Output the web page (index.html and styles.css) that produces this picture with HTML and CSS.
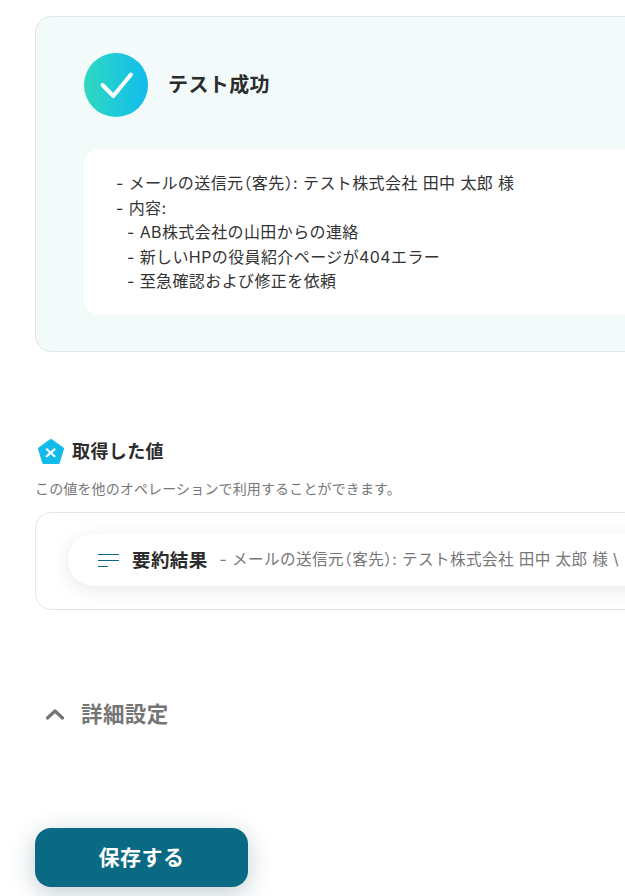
FILE: index.html
```html
<!DOCTYPE html>
<html lang="ja">
<head>
  <meta charset="UTF-8" />
  <title>テスト成功</title>
  <link rel="stylesheet" href="styles.css">
</head>
<body>
  <div class="page">
    <!-- result card -->
    <div class="result-card">
      <div class="result-head">
        <svg class="check" width="64" height="64" viewBox="0 0 64 64">
          <defs>
            <linearGradient id="checkGrad" x1="0" y1="0" x2="1" y2="0">
              <stop offset="0" stop-color="#2fd9bf" />
              <stop offset="1" stop-color="#10bcee" />
            </linearGradient>
          </defs>
          <circle cx="32" cy="32" r="32" fill="url(#checkGrad)" />
          <path d="M18.500 32L29.300 43L47 21.500" fill="none" stroke="#fff" stroke-width="4" stroke-linecap="round" stroke-linejoin="round" />
        </svg>
        <h2>テスト成功</h2>
      </div>
      <div class="result-body">
        <p>- メールの送信元<span class="halt">（客先）</span>: テスト株式会社 田中 太郎 様</p>
        <p>- 内容:</p>
        <p class="sub">- AB株式会社の山田からの連絡</p>
        <p class="sub">- 新しいHPの役員紹介ページが404エラー</p>
        <p class="sub">- 至急確認および修正を依頼</p>
      </div>
    </div>

    <!-- values -->
    <div class="values-title">
      <svg width="28" height="28" viewBox="0 0 28 28">
        <path d="M14 2.500L25.500 10.800L21.300 24.500H6.700L2.500 10.800Z" fill="#12bbe9" stroke="#12bbe9" stroke-width="3" stroke-linejoin="round" />
        <path d="M9.800 11.300L17.500 18.200M17.500 11.300L15 13.500M12.300 15.900L9.800 18.200" fill="none" stroke="#fff" stroke-width="2.200" stroke-linecap="round" />
      </svg>
      <h3>取得した値</h3>
    </div>
    <p class="values-note">この値を他のオペレーションで利用することができます。</p>
    <div class="values-box">
      <div class="value-pill">
        <svg class="lines" width="22" height="14" viewBox="0 0 22 14">
          <path d="M1 1.500H22" stroke="#0a6a84" stroke-width="1" />
          <path d="M1 7.500H22" stroke="#0a6a84" stroke-width="1" />
          <path d="M1 13.500H11" stroke="#0a6a84" stroke-width="1" />
        </svg>
        <span class="value-name">要約結果</span>
        <span class="value-text">- メールの送信元<span class="halt">（客先）</span>: テスト株式会社 田中 太郎 様 \</span>
      </div>
    </div>

    <!-- details -->
    <div class="details">
      <svg width="20" height="12" viewBox="0 0 20 12">
        <path d="M2.500 10L10 3L17.500 10" fill="none" stroke="#757575" stroke-width="3.200" stroke-linecap="round" stroke-linejoin="round" />
      </svg>
      <span>詳細設定</span>
    </div>

    <button class="btn-save">保存する</button>
  </div>
</body>
</html>
```

FILE: styles.css
```css
html, body {
  margin: 0;
  height: 100%;
  overflow: hidden;
}
body {
  font-family: Inter, "Noto Sans CJK JP", sans-serif;
  background-color: #fff;
  color: #2c2c2c;
  letter-spacing: 0.025em;
}
p, h2, h3 {
  margin: 0;
}
svg {
  flex-shrink: 0;
}
.halt {
  font-feature-settings: "halt";
}
.page {
  width: 900px;
  padding: 16px 0 0 35px;
}

/* result card */
.result-card {
  box-sizing: border-box;
  height: 336px;
  padding: 36px 48px;
  background-color: #f2fafa;
  border: 1px solid #e2e6e8;
  border-radius: 16px;
}
.result-head {
  display: flex;
  align-items: center;
  gap: 20px;
}
.result-head h2 {
  font-size: 20px;
  font-weight: 700;
  line-height: 64px;
}
.result-body {
  margin-top: 32px;
  padding: 22px 32px 21px 32px;
  background-color: #fff;
  border-radius: 16px;
  font-size: 16px;
  line-height: 24.500px;
  color: #333;
}
.result-body .sub {
  padding-left: 11px;
}

/* values */
.values-title {
  display: flex;
  align-items: center;
  gap: 7px;
  margin: 86px 0 0 2px;
}
.values-title h3 {
  font-size: 18px;
  font-weight: 700;
  line-height: 24px;
}
.values-note {
  margin-top: 13px;
  font-size: 14px;
  letter-spacing: 0.01em;
  line-height: 20px;
  color: #777;
}
.values-box {
  box-sizing: border-box;
  height: 98px;
  margin-top: 13px;
  padding: 21px 32px;
  border: 1px solid #e5e5e5;
  border-radius: 16px;
}
.value-pill {
  display: flex;
  align-items: center;
  height: 52px;
  padding-left: 29px;
  background-color: #fff;
  border-radius: 26px;
  box-shadow: 0 4px 20px rgba(0, 0, 0, 0.09);
  white-space: nowrap;
}
.value-name {
  margin-left: 13px;
  font-size: 18.500px;
  font-weight: 700;
  line-height: 52px;
}
.value-text {
  margin-left: 12px;
  font-size: 15.600px;
  line-height: 52px;
  color: #777;
}

/* details */
.details {
  display: flex;
  align-items: center;
  gap: 16px;
  margin: 90px 0 0 10px;
  font-size: 21.500px;
  font-weight: 700;
  line-height: 28px;
  color: #757575;
}

.btn-save {
  display: block;
  width: 213px;
  height: 59px;
  margin-top: 100px;
  padding-bottom: 4px;
  background-color: #0a6a84;
  border: none;
  border-radius: 16px;
  box-shadow: 0 6px 24px rgba(10, 60, 80, 0.25);
  font-family: inherit;
  font-size: 21px;
  font-weight: 700;
  letter-spacing: 0.025em;
  color: #fff;
}
```
